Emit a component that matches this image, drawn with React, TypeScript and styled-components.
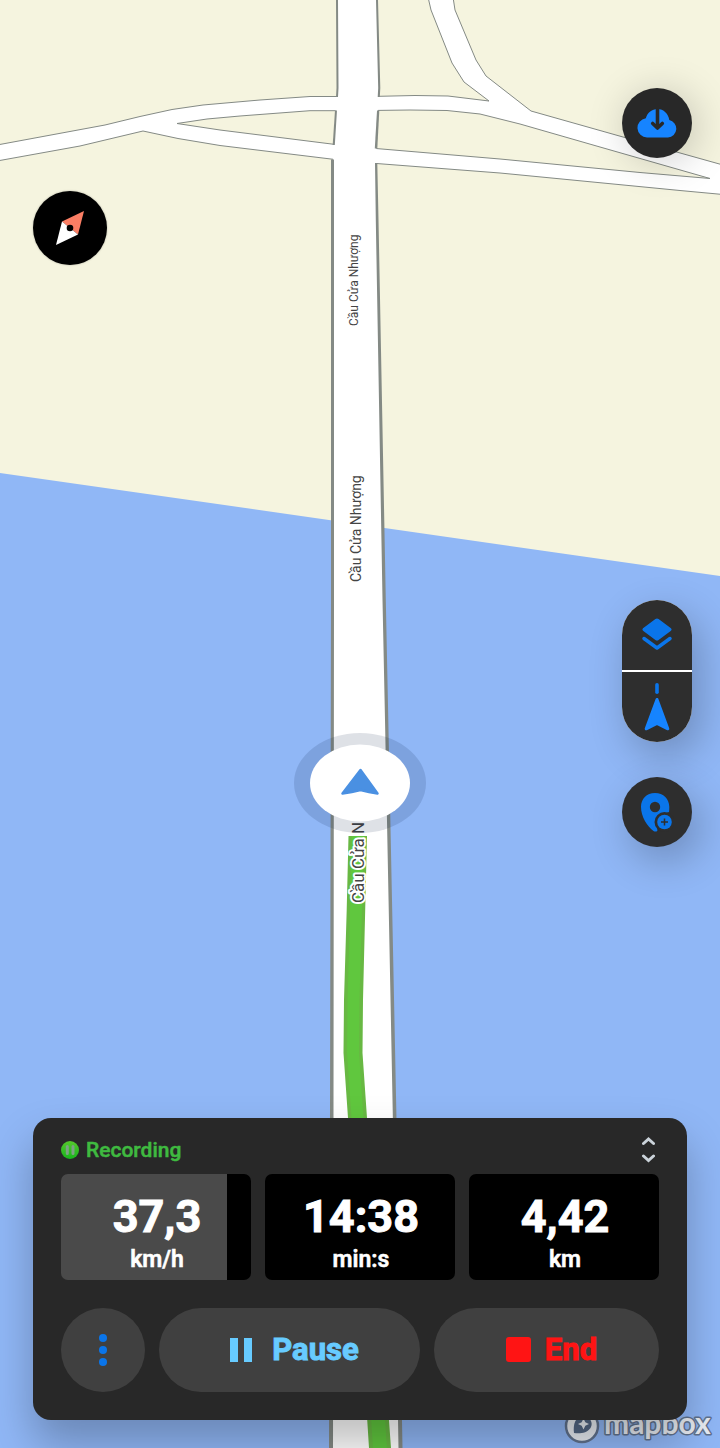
import React from "react";
import styled, { createGlobalStyle } from "styled-components";

const color = {
  land: "#f5f4df",
  water: "#90b7f6",
  casing: "#848a85",
  track: "#60c73e",
  trackEdge: "#68b843",
  surface: "#282828",
  control: "#2e2e2e",
  button: "#404040",
  blue: "#0a75ea",
  brightBlue: "#1684ff",
  sky: "#67cbff",
  red: "#ff1414",
  green: "#3fba40",
};

const GlobalStyle = createGlobalStyle`
  *, *::before, *::after { box-sizing: border-box; }
  body {
    margin: 0;
    background: ${color.water};
    font-family: Roboto, "Liberation Sans", sans-serif;
  }
`;

const Screen = styled.main`
  position: relative;
  isolation: isolate;
  display: flex;
  flex-direction: column;
  min-height: 100vh;
  overflow: hidden;
`;

const MapCanvas = styled.svg`
  position: absolute;
  inset: 0;
  z-index: -2;
  width: 100%;
  height: 100%;
`;

const RoadLabel = styled.text`
  font-family: Roboto, "Liberation Sans", sans-serif;
  fill: #444444;
  stroke: #ffffff;
  stroke-width: 4px;
  stroke-linejoin: round;
  paint-order: stroke;
`;

const MapLogo = styled.a`
  position: absolute;
  right: 9px;
  bottom: 4px;
  z-index: -1;
  display: flex;
  align-items: center;
  gap: 4px;
`;

const LogoWord = styled.svg`
  overflow: visible;
  font-family: Lato, "Open Sans", sans-serif;
  font-size: 30px;
  font-weight: 700;
`;

const MapControls = styled.div`
  flex: 1;
  display: flex;
  justify-content: space-between;
  align-items: stretch;
  padding: 88px 28px 271px 33px;
`;

const ControlColumn = styled.div`
  display: flex;
  flex-direction: column;
  gap: 35px;
`;

const RoundButton = styled.button`
  display: grid;
  place-items: center;
  width: 70px;
  height: 70px;
  padding: 0;
  border: 0;
  border-radius: 50%;
  background: ${color.control};
  box-shadow: 8px 14px 40px rgba(0, 0, 0, 0.24);
  cursor: pointer;
`;

const DownloadButton = styled(RoundButton)`
  margin-bottom: auto;
  background: ${color.surface};
  box-shadow: 4px 4px 40px rgba(0, 0, 0, 0.2);
`;

const CompassButton = styled(RoundButton)`
  width: 74px;
  height: 74px;
  margin-top: 103px;
  background: #000000;
  box-shadow: 0 0 2px rgba(0, 0, 0, 0.3);
`;

const ControlStack = styled.div`
  display: flex;
  flex-direction: column;
  width: 70px;
  overflow: hidden;
  border-radius: 35px;
  background: #ffffff;
  gap: 2px;
  box-shadow: 8px 14px 40px rgba(0, 0, 0, 0.24);
`;

const StackButton = styled(RoundButton)`
  border-radius: 0;
  box-shadow: none;
`;

const Panel = styled.section`
  display: flex;
  flex-direction: column;
  margin: 0 33px 28px;
  padding: 16px 28px 28px;
  border-radius: 18px;
  background: ${color.surface};
  box-shadow: 0 24px 44px rgba(0, 0, 0, 0.26);
`;

const PanelHeader = styled.header`
  display: flex;
  justify-content: space-between;
  align-items: center;
  height: 32px;
  margin-bottom: 8px;
`;

const Status = styled.h1`
  display: flex;
  align-items: center;
  gap: 7px;
  margin: 0;
  color: ${color.green};
  font-size: 21px;
  font-weight: 500;
  line-height: 32px;
  -webkit-text-stroke: 0.5px currentColor;
`;

const ExpandButton = styled.button`
  display: grid;
  place-items: center;
  width: 22px;
  height: 32px;
  padding: 0;
  border: 0;
  background: none;
  cursor: pointer;
`;

const Stats = styled.div`
  display: grid;
  grid-template-columns: repeat(3, 1fr);
  gap: 14px;
`;

const Stat = styled.div<{ $level: number }>`
  display: flex;
  flex-direction: column;
  align-items: center;
  height: 106px;
  padding: 18px 0 0 2px;
  border-radius: 7px;
  background: linear-gradient(
    to right,
    #4a4a4a ${(p) => p.$level}%,
    #000000 ${(p) => p.$level}%
  );
  color: #ffffff;
`;

const StatValue = styled.span`
  font-size: 45px;
  font-weight: 700;
  line-height: 50px;
  -webkit-text-stroke: 1px currentColor;
`;

const StatUnit = styled.span`
  font-size: 23px;
  font-weight: 600;
  line-height: 36px;
  -webkit-text-stroke: 0.5px currentColor;
`;

const Actions = styled.div`
  display: flex;
  gap: 14px;
  margin-top: 28px;
`;

const ActionButton = styled.button<{ $grow: number; $tint: string; $gap: number }>`
  display: flex;
  flex: ${(p) => p.$grow} 1 0;
  align-items: center;
  justify-content: center;
  gap: ${(p) => p.$gap}px;
  height: 84px;
  padding: 0 0 0 10px;
  border: 0;
  border-radius: 42px;
  background: ${color.button};
  color: ${(p) => p.$tint};
  font-family: inherit;
  font-size: 31px;
  font-weight: 700;
  line-height: 40px;
  -webkit-text-stroke: 1px currentColor;
  cursor: pointer;
`;

const MoreButton = styled.button`
  display: grid;
  place-items: center;
  flex: none;
  width: 84px;
  height: 84px;
  padding: 0;
  border: 0;
  border-radius: 50%;
  background: ${color.button};
  cursor: pointer;
`;

const stats = [
  { value: "37,3", unit: "km/h", level: 87.4 },
  { value: "14:38", unit: "min:s", level: 0 },
  { value: "4,42", unit: "km", level: 0 },
];

const roadLabels = [
  { x: 358, y: 326, size: 12 },
  { x: 361, y: 582, size: 14 },
  { x: 364, y: 903, size: 17 },
];

function RoadMap() {
  return (
    <MapCanvas
      viewBox="0 0 720 1448"
      preserveAspectRatio="xMidYMid slice"
      role="img"
      aria-label="Map of the bridge"
    >
      <rect width="720" height="1448" fill={color.land} />
      <path d="M0 473L720 576V1448H0Z" fill={color.water} />

      <g fill="#fff" stroke={color.casing} strokeWidth="1">
        <path d="M-3 145L105 125L140 116.5L172 109.5L203 105L260 100L310 96.5H345V160.5L335 159.5L220 145.5L178 138.5L143 131L80 146L-3 161Z" />
        <path
          d="M177 123.5L207 119L240 116L310 110.7H345V145.7L220 130Z"
          fill={color.land}
        />
        <path d="M370 96.5L415 95.5L448 96L489 101L464 82L452 63L431 10L428 -3H453L455 10L476 60L486 76L531 111L623 137L723 165V194.500L680 190.500L500 173L370 163Z" />
        <path
          d="M370 110.500L410 110L447 110.500L480 114L520 124L600 147L710 178.500L640 172.500L500 159L370 148Z"
          fill={color.land}
        />
      </g>

      <path
        d="M337 -2V90L336 104L333 150L332.500 600L331 1450H400L394 1110L386 720L383 520L377 220L376 155L379 90L377 -2Z"
        fill="#fff"
      />
      <g fill={color.casing}>
        <path d="M336 0H338L338.500 88L338 97H336L336.500 88Z" />
        <path d="M335 110.500H337L334.800 145H332.700Z" />
        <path d="M331 159.500H334L334 600L333.500 1110L333 1448H329L330 1110L331 600Z" />
        <path d="M376 0H378L380.300 88L379.800 97H377.700L378.200 88Z" />
        <path d="M377 110.500H379.300L377.300 148.500H374.800Z" />
        <path d="M375 163H377.300L378.500 220L385.800 600L388.300 720L396.300 1110L402.500 1448H398.500L392.700 1110L385 720L382.500 600L375.800 220Z" />
      </g>

      <path
        d="M348.500 836L346.700 910L344 1000L343.500 1053L348 1118L369 1448H391L367 1118L362.500 1053L363 1000L365.200 910L367 836Z"
        fill={color.trackEdge}
      />
      <path
        d="M351.500 836L350 910L347.500 1000L347 1053L351.500 1118L373 1448H387L363.500 1118L359 1053L359.500 1000L362 910L364 836Z"
        fill={color.track}
      />

      {roadLabels.map((label) => (
        <RoadLabel
          key={label.y}
          fontSize={label.size}
          transform={`translate(${label.x} ${label.y}) rotate(-90)`}
        >
          Cầu Cửa Nhượng
        </RoadLabel>
      ))}

      <ellipse cx="360" cy="783" rx="66" ry="50" fill="rgba(0,24,60,0.13)" />
      <ellipse cx="360" cy="783" rx="50" ry="38.500" fill="#fff" />
      <path
        d="M360.500 770L377.500 793.500Q369 792 360.500 790Q352 792 342.500 793.500Z"
        fill="#4a90e2"
        stroke="#4a90e2"
        strokeWidth="2.500"
        strokeLinejoin="round"
      />
    </MapCanvas>
  );
}

function CompassIcon() {
  return (
    <svg width="36" height="40" viewBox="0 0 36 40" aria-hidden="true">
      <path d="M32 3L10 13.500L26 26.500Z" fill="#fa7e64" />
      <path d="M4 37L10 13.500L26 26.500Z" fill="#fff" />
      <circle cx="18" cy="20" r="3.300" fill="#000" />
    </svg>
  );
}

function CloudDownloadIcon() {
  return (
    <svg width="40" height="30" viewBox="0 0 40 30" aria-hidden="true">
      <path
        d="M10 29.500A9.700 9.700 0 0 1 8.800 10.200C10.500 4.500 15 1 20.500 1C26.500 1 31.500 5.800 32.300 12.100A8.800 8.800 0 0 1 31 29.500Z"
        fill={color.brightBlue}
      />
      <path d="M20.500 0V19" stroke={color.surface} strokeWidth="3.600" />
      <path
        d="M15.700 15.500L20.500 20L25.300 15.500"
        fill="none"
        stroke={color.surface}
        strokeWidth="3.600"
        strokeLinecap="round"
        strokeLinejoin="round"
      />
    </svg>
  );
}

function LayersIcon() {
  return (
    <svg width="32" height="36" viewBox="0 0 32 36" aria-hidden="true">
      <path
        d="M14.400 2Q16 .8 17.600 2L30 11.300Q31.300 12.500 30 13.700L17.600 23Q16 24.200 14.400 23L2 13.700Q.7 12.500 2 11.300Z"
        fill={color.blue}
      />
      <path
        d="M3 21.500L16 31L29 21.500"
        fill="none"
        stroke={color.blue}
        strokeWidth="3.500"
        strokeLinecap="round"
        strokeLinejoin="round"
      />
    </svg>
  );
}

function HeadingIcon() {
  return (
    <svg width="28" height="50" viewBox="0 0 28 50" aria-hidden="true">
      <rect x="12.200" y="1" width="3.600" height="11" rx="1.800" fill={color.blue} />
      <path
        d="M14 17.500L24.800 46.800L14 41.500L3.200 46.800Z"
        fill={color.brightBlue}
        stroke={color.brightBlue}
        strokeWidth="3"
        strokeLinejoin="round"
      />
    </svg>
  );
}

function AddPinIcon() {
  return (
    <svg width="34" height="40" viewBox="0 0 34 40" aria-hidden="true">
      <path
        d="M15 1C6.500 1 1 7 1 15C1 24.500 7 34 13.500 39Q15.500 40.200 17.300 39V24L29 20Q29.300 17.500 29.300 15C29.300 7 23.500 1 15 1Z"
        fill={color.blue}
      />
      <circle cx="15" cy="15" r="5.200" fill={color.control} />
      <circle cx="24.500" cy="30" r="10" fill={color.control} />
      <circle cx="24.500" cy="30" r="7.300" fill={color.blue} />
      <path d="M24.500 26.500V33.500M21 30H28" stroke={color.control} strokeWidth="1.500" />
    </svg>
  );
}

function RecordingIcon() {
  return (
    <svg width="18" height="18" viewBox="0 0 18 18" aria-hidden="true">
      <defs>
        <linearGradient id="recording" x1="0" y1="0" x2="0" y2="1">
          <stop offset="0" stopColor="#55c82c" />
          <stop offset="1" stopColor="#18b51d" />
        </linearGradient>
      </defs>
      <circle cx="9" cy="9" r="9" fill="url(#recording)" />
      <path
        d="M6.300 5.500V12.500M12 5.500V12.500"
        stroke="#7da385"
        strokeWidth="3"
        strokeLinecap="round"
      />
    </svg>
  );
}

function ExpandIcon() {
  return (
    <svg width="14" height="28" viewBox="0 0 14 28" aria-hidden="true">
      <path
        d="M2.500 7.500L7.500 3L12.500 7.500M2.500 20L7.500 24.500L12.500 20"
        fill="none"
        stroke="#cbd3da"
        strokeWidth="3"
        strokeLinecap="round"
        strokeLinejoin="miter"
      />
    </svg>
  );
}

function MapboxLogo() {
  return (
    <MapLogo href="https://www.mapbox.com/" aria-label="Mapbox">
      <svg width="36" height="36" viewBox="0 0 36 36" aria-hidden="true">
        <circle cx="18" cy="18" r="16" fill="#e9edf3" stroke="#61738f" strokeWidth="2.500" />
        <path
          d="M10 25C9 17 11 8 19.500 8A8 8 0 0 1 26.500 20C23 25 16 26 10 25Z"
          fill="#536784"
        />
        <path
          d="M19.500 10.500L21.300 14.200L25 16L21.300 17.800L19.500 21.500L17.700 17.800L14 16L17.700 14.200Z"
          fill="#e9edf3"
        />
      </svg>
      <LogoWord width="107" height="36" viewBox="0 0 107 36">
        <text
          x="0"
          y="26"
          fill="#e9edf3"
          stroke="#61738f"
          strokeWidth="3"
          strokeLinejoin="round"
          paintOrder="stroke"
        >
          mapbox
        </text>
      </LogoWord>
    </MapLogo>
  );
}

export default function App() {
  return (
    <>
      <GlobalStyle />
      <Screen>
        <RoadMap />
        <MapboxLogo />
        <MapControls>
          <ControlColumn>
            <CompassButton type="button" aria-label="Compass">
              <CompassIcon />
            </CompassButton>
          </ControlColumn>
          <ControlColumn>
            <DownloadButton type="button" aria-label="Download map">
              <CloudDownloadIcon />
            </DownloadButton>
            <ControlStack>
              <StackButton type="button" aria-label="Map layers">
                <LayersIcon />
              </StackButton>
              <StackButton type="button" aria-label="Follow heading">
                <HeadingIcon />
              </StackButton>
            </ControlStack>
            <RoundButton type="button" aria-label="Add waypoint">
              <AddPinIcon />
            </RoundButton>
          </ControlColumn>
        </MapControls>

        <Panel>
          <PanelHeader>
            <Status>
              <RecordingIcon />
              Recording
            </Status>
            <ExpandButton type="button" aria-label="Expand panel">
              <ExpandIcon />
            </ExpandButton>
          </PanelHeader>
          <Stats>
            {stats.map((stat) => (
              <Stat key={stat.unit} $level={stat.level}>
                <StatValue>{stat.value}</StatValue>
                <StatUnit>{stat.unit}</StatUnit>
              </Stat>
            ))}
          </Stats>
          <Actions>
            <MoreButton type="button" aria-label="More options">
              <svg width="8" height="32" viewBox="0 0 8 32" fill={color.blue} aria-hidden="true">
                <circle cx="4" cy="4" r="4" />
                <circle cx="4" cy="16" r="4" />
                <circle cx="4" cy="28" r="4" />
              </svg>
            </MoreButton>
            <ActionButton type="button" $grow={251} $tint={color.sky} $gap={20}>
              <svg width="22" height="24" viewBox="0 0 22 24" fill="currentColor" aria-hidden="true">
                <path d="M0 0H8V24H0ZM14 0H22V24H14Z" />
              </svg>
              Pause
            </ActionButton>
            <ActionButton type="button" $grow={215} $tint={color.red} $gap={14}>
              <svg width="25" height="26" viewBox="0 0 25 26" fill="currentColor" aria-hidden="true">
                <rect width="25" height="25" rx="3" />
              </svg>
              End
            </ActionButton>
          </Actions>
        </Panel>
      </Screen>
    </>
  );
}
